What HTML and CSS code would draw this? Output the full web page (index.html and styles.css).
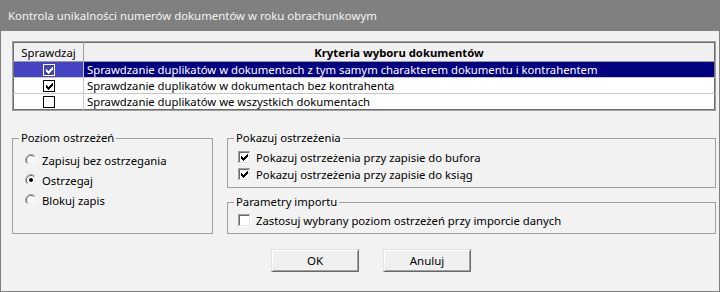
FILE: index.html
```html
<!DOCTYPE html>
<html lang="pl">
<head>
<meta charset="utf-8">
<title>Kontrola unikalności</title>
<link rel="stylesheet" href="styles.css">
</head>
<body>
<div class="window">
  <div class="titlebar">Kontrola unikalności numerów dokumentów w roku obrachunkowym</div>
  <div class="content">
    <div class="gridbox">
      <table class="grid">
        <thead>
          <tr><th class="c1">Sprawdzaj</th><th class="c2">Kryteria wyboru dokumentów</th></tr>
        </thead>
        <tbody>
          <tr class="sel">
            <td class="c1"><svg class="tcb" width="12" height="12" viewBox="0 0 12 12" shape-rendering="crispEdges"><rect x="0.5" y="0.5" width="11" height="11" fill="none" stroke="#fff"/><g fill="#fff"><rect x="3" y="5" width="1" height="3"/><rect x="4" y="6" width="1" height="3"/><rect x="5" y="7" width="1" height="3"/><rect x="6" y="6" width="1" height="3"/><rect x="7" y="5" width="1" height="3"/><rect x="8" y="4" width="1" height="3"/><rect x="9" y="3" width="1" height="3"/></g></svg></td>
            <td class="c2">Sprawdzanie duplikatów w dokumentach z tym samym charakterem dokumentu i kontrahentem</td>
          </tr>
          <tr>
            <td class="c1"><svg class="tcb" width="12" height="12" viewBox="0 0 12 12" shape-rendering="crispEdges"><rect x="0.5" y="0.5" width="11" height="11" fill="#fff" stroke="#000"/><g fill="#000"><rect x="3" y="5" width="1" height="3"/><rect x="4" y="6" width="1" height="3"/><rect x="5" y="7" width="1" height="3"/><rect x="6" y="6" width="1" height="3"/><rect x="7" y="5" width="1" height="3"/><rect x="8" y="4" width="1" height="3"/><rect x="9" y="3" width="1" height="3"/></g></svg></td>
            <td class="c2">Sprawdzanie duplikatów w dokumentach bez kontrahenta</td>
          </tr>
          <tr>
            <td class="c1"><svg class="tcb" width="12" height="12" viewBox="0 0 12 12" shape-rendering="crispEdges"><rect x="0.5" y="0.5" width="11" height="11" fill="#fff" stroke="#000"/></svg></td>
            <td class="c2">Sprawdzanie duplikatów we wszystkich dokumentach</td>
          </tr>
        </tbody>
      </table>
    </div>

    <div class="groups">
      <fieldset class="grp grp-level">
        <legend>Poziom ostrzeżeń</legend>
        <div class="opt radio-opt">
          <svg class="radio" width="12" height="12" viewBox="0 0 12 12"><circle cx="6" cy="6" r="5.5" fill="#fff"/><path d="M9.9 2.1A5.5 5.5 0 0 0 2.1 9.9" fill="none" stroke="#a0a0a0"/><path d="M9.2 2.8A4.5 4.5 0 0 0 2.8 9.2" fill="none" stroke="#696969"/><path d="M2.1 9.9A5.5 5.5 0 0 0 9.9 2.1" fill="none" stroke="#fff"/><path d="M2.8 9.2A4.5 4.5 0 0 0 9.2 2.8" fill="none" stroke="#e3e3e3"/></svg>
          <span>Zapisuj bez ostrzegania</span>
        </div>
        <div class="opt radio-opt">
          <svg class="radio" width="12" height="12" viewBox="0 0 12 12"><circle cx="6" cy="6" r="5.5" fill="#fff"/><path d="M9.9 2.1A5.5 5.5 0 0 0 2.1 9.9" fill="none" stroke="#a0a0a0"/><path d="M9.2 2.8A4.5 4.5 0 0 0 2.8 9.2" fill="none" stroke="#696969"/><path d="M2.1 9.9A5.5 5.5 0 0 0 9.9 2.1" fill="none" stroke="#fff"/><path d="M2.8 9.2A4.5 4.5 0 0 0 9.2 2.8" fill="none" stroke="#e3e3e3"/><circle cx="6" cy="6" r="2" fill="#000"/></svg>
          <span>Ostrzegaj</span>
        </div>
        <div class="opt radio-opt">
          <svg class="radio" width="12" height="12" viewBox="0 0 12 12"><circle cx="6" cy="6" r="5.5" fill="#fff"/><path d="M9.9 2.1A5.5 5.5 0 0 0 2.1 9.9" fill="none" stroke="#a0a0a0"/><path d="M9.2 2.8A4.5 4.5 0 0 0 2.8 9.2" fill="none" stroke="#696969"/><path d="M2.1 9.9A5.5 5.5 0 0 0 9.9 2.1" fill="none" stroke="#fff"/><path d="M2.8 9.2A4.5 4.5 0 0 0 9.2 2.8" fill="none" stroke="#e3e3e3"/></svg>
          <span>Blokuj zapis</span>
        </div>
      </fieldset>

      <div class="rightcol">
        <fieldset class="grp grp-show">
          <legend>Pokazuj ostrzeżenia</legend>
          <div class="opt check-opt">
            <svg class="cb" width="13" height="13" viewBox="0 0 13 13" shape-rendering="crispEdges"><rect width="13" height="13" fill="#fff"/><rect x="0" y="0" width="12" height="1" fill="#a0a0a0"/><rect x="0" y="0" width="1" height="12" fill="#a0a0a0"/><rect x="1" y="1" width="10" height="1" fill="#696969"/><rect x="1" y="1" width="1" height="10" fill="#696969"/><rect x="1" y="11" width="11" height="1" fill="#e3e3e3"/><rect x="11" y="1" width="1" height="11" fill="#e3e3e3"/><g fill="#000"><rect x="3" y="5" width="1" height="3"/><rect x="4" y="6" width="1" height="3"/><rect x="5" y="7" width="1" height="3"/><rect x="6" y="6" width="1" height="3"/><rect x="7" y="5" width="1" height="3"/><rect x="8" y="4" width="1" height="3"/><rect x="9" y="3" width="1" height="3"/></g></svg>
            <span>Pokazuj ostrzeżenia przy zapisie do bufora</span>
          </div>
          <div class="opt check-opt">
            <svg class="cb" width="13" height="13" viewBox="0 0 13 13" shape-rendering="crispEdges"><rect width="13" height="13" fill="#fff"/><rect x="0" y="0" width="12" height="1" fill="#a0a0a0"/><rect x="0" y="0" width="1" height="12" fill="#a0a0a0"/><rect x="1" y="1" width="10" height="1" fill="#696969"/><rect x="1" y="1" width="1" height="10" fill="#696969"/><rect x="1" y="11" width="11" height="1" fill="#e3e3e3"/><rect x="11" y="1" width="1" height="11" fill="#e3e3e3"/><g fill="#000"><rect x="3" y="5" width="1" height="3"/><rect x="4" y="6" width="1" height="3"/><rect x="5" y="7" width="1" height="3"/><rect x="6" y="6" width="1" height="3"/><rect x="7" y="5" width="1" height="3"/><rect x="8" y="4" width="1" height="3"/><rect x="9" y="3" width="1" height="3"/></g></svg>
            <span>Pokazuj ostrzeżenia przy zapisie do ksiąg</span>
          </div>
        </fieldset>
        <fieldset class="grp grp-import">
          <legend>Parametry importu</legend>
          <div class="opt check-opt">
            <svg class="cb" width="13" height="13" viewBox="0 0 13 13" shape-rendering="crispEdges"><rect width="13" height="13" fill="#fff"/><rect x="0" y="0" width="12" height="1" fill="#a0a0a0"/><rect x="0" y="0" width="1" height="12" fill="#a0a0a0"/><rect x="1" y="1" width="10" height="1" fill="#696969"/><rect x="1" y="1" width="1" height="10" fill="#696969"/><rect x="1" y="11" width="11" height="1" fill="#e3e3e3"/><rect x="11" y="1" width="1" height="11" fill="#e3e3e3"/></svg>
            <span>Zastosuj wybrany poziom ostrzeżeń przy imporcie danych</span>
          </div>
        </fieldset>
      </div>
    </div>

    <div class="buttons">
      <button class="btn" type="button">OK</button>
      <button class="btn" type="button">Anuluj</button>
    </div>
  </div>
</div>
</body>
</html>
```

FILE: styles.css
```css
* { box-sizing: border-box; }

html, body {
  margin: 0;
  padding: 0;
  background: #f0f0f0;
}

body {
  font-family: "Noto Sans", "Open Sans", sans-serif;
  font-size: 11.3px;
  color: #000;
}

.window {
  width: 720px;
  height: 292px;
  border: 1px solid #808080;
  border-top: 0;
  background: #f2f2f2;
  display: flex;
  flex-direction: column;
}

.titlebar {
  height: 31px;
  margin: 0 -1px;
  padding-left: 8px;
  background: #808080;
  color: #f4f4f4;
  font-size: 11.4px;
  display: flex;
  align-items: center;
  white-space: nowrap;
}

.content {
  padding: 10px 3px 0 11px;
  display: flex;
  flex-direction: column;
}

/* ---- grid ---- */
.gridbox {
  border: 1px solid #a0a0a0;
}

.grid {
  width: 100%;
  border: 1px solid #6d6d6d;
  border-collapse: collapse;
  background: #fff;
  table-layout: fixed;
}

.grid th {
  height: 19px;
  padding: 0;
  background: #f0f0f0;
  font-weight: normal;
  border-bottom: 1px solid #9a9a9a;
  text-align: center;
  white-space: nowrap;
}

.grid th.c2 {
  font-weight: bold;
}

.grid .c1 {
  width: 70px;
  border-right: 1px solid #a0a0a0;
  text-align: center;
}

.grid td {
  height: 16px;
  padding: 0;
  border-bottom: 1px solid #c8c8c8;
  white-space: nowrap;
  line-height: 15px;
}

.grid tbody tr:last-child td {
  border-bottom: 0;
}

.grid td.c2 {
  padding-left: 3px;
}

.grid td.c1 {
  border-right-color: #c8c8c8;
}

.tcb {
  display: block;
  margin: 0 auto;
}

.grid tr.sel td.c1 {
  background: #4343c3;
}

.grid tr.sel td.c2 {
  background: #000080;
  color: #fff;
}

/* ---- groups ---- */
.groups {
  display: flex;
  gap: 14px;
  margin-top: 19px;
  align-items: stretch;
}

.grp {
  margin: 0;
  border: 1px solid #a0a0a0;
  padding: 3px 6px 4px 6px;
  min-width: 0;
}

.grp legend {
  padding: 0 2px;
  line-height: 16px;
}

.grp-level {
  width: 201px;
  flex: none;
  padding-top: 4px;
}

.rightcol {
  flex: 1;
  display: flex;
  flex-direction: column;
  gap: 6px;
}

.opt {
  display: flex;
  align-items: center;
  white-space: nowrap;
}

.radio-opt {
  height: 20px;
  padding-left: 6px;
}

.radio {
  flex: none;
  margin-right: 5px;
}

.check-opt {
  height: 17px;
  padding-left: 4px;
}

.cb {
  flex: none;
  margin-right: 5px;
}

.grp-import {
  padding-top: 2px;
}

/* ---- buttons ---- */
.buttons {
  display: flex;
  gap: 24px;
  margin-top: 15px;
  padding-left: 259px;
}

.btn {
  width: 88px;
  height: 23px;
  padding: 0;
  font-family: "Noto Sans", "Open Sans", sans-serif;
  font-size: 11.5px;
  color: #000;
  background: #f0f0f0;
  border: 1px solid;
  border-color: #e3e3e3 #696969 #696969 #e3e3e3;
  box-shadow: inset 1px 1px #fff, inset -1px -1px #a0a0a0;
}
```
